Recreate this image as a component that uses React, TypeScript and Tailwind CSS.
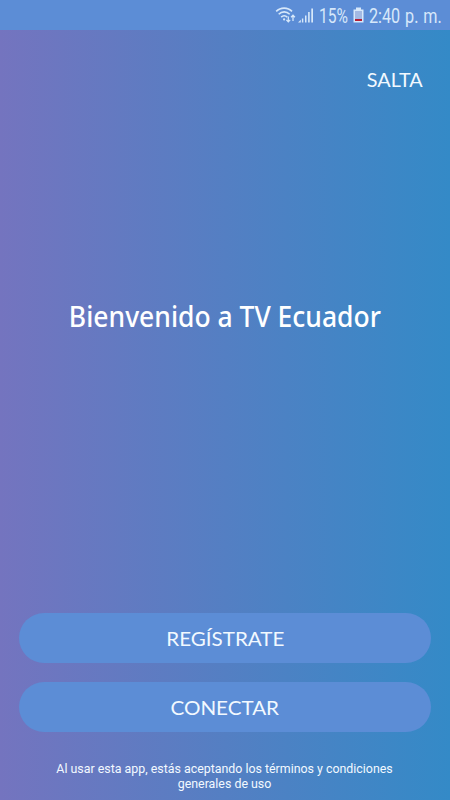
import React from 'react';

const WifiIcon: React.FC = () => (
  <svg className="h-[18px] w-[22px] shrink-0" viewBox="0 0 22 18" fill="none" stroke="currentColor" strokeWidth="1.6">
    <path d="M1.2 5.4C5.5 1 12.8 1 17 5.4" />
    <path d="M3.7 8.3C6.8 5.1 11.5 5.1 14.7 8.3" />
    <path d="M6.2 11.1c1.7-1.8 4.3-1.8 6 0" />
    <circle cx="9.1" cy="13.4" r="1.1" fill="currentColor" stroke="none" />
    <path d="M13.3 10.5v5.5M11.4 13.9l1.9 2 1.9-2M18 15V9.3M16.1 11.3l1.9-2 1.9 2" strokeWidth="1.3" />
  </svg>
);

const SignalIcon: React.FC = () => (
  <svg className="h-[18px] w-[16px] shrink-0" viewBox="0 0 16 18" fill="currentColor">
    <path d="M0 16.5h2.8v-2.8z" />
    <path d="M3.9 12.5h1.4v4H3.9zM7 9.5h1.5v7H7zM10.1 6h1.6v10.5h-1.6zM13.3 2.5H15v14h-1.7z" />
  </svg>
);

const BatteryIcon: React.FC = () => (
  <svg className="h-[16px] w-[11px] shrink-0" viewBox="0 0 11 16">
    <path d="M3 .5h5v2h2.5V15.5H.5V2.5H3z" fill="#d7e8fa" />
    <path d="M2 4h7v8H2z" fill="#a3b9e3" />
    <path d="M2 12h7v2H2z" fill="#b51f35" />
  </svg>
);

const StatusBar: React.FC = () => (
  <header className="flex h-[30px] items-center bg-[#5c8dd6] pl-[275px] font-['Roboto'] text-[19.5px] leading-[20px] text-[#d7e8fa]">
    <WifiIcon />
    <div className="ml-[1px] flex">
      <SignalIcon />
    </div>
    <div className="ml-[5px] w-[30px] whitespace-nowrap pt-[3px]">
      <span className="inline-block origin-left scale-x-[0.8]">15%</span>
    </div>
    <div className="ml-[4px] flex">
      <BatteryIcon />
    </div>
    <div className="ml-[5px] w-[74px] whitespace-nowrap pt-[3px]">
      <span className="inline-block origin-left scale-x-[0.83] [word-spacing:1px]">2:40 p. m.</span>
    </div>
  </header>
);

const PillButton: React.FC<{ label: string }> = ({ label }) => (
  <button className="flex h-[50px] w-full items-center justify-center rounded-full bg-[#5c8dd6] font-['Lato'] text-xl text-[#f2f9ff]">
    <span className="inline-block scale-x-[1.03]">{label}</span>
  </button>
);

export default function App() {
  return (
    <div className="flex h-[800px] w-[450px] flex-col overflow-hidden bg-linear-to-r/srgb from-[#7474bf] to-[#348ac7]">
      <StatusBar />
      <div className="flex justify-end pr-[27px] pt-[38px]">
        <button className="origin-right scale-x-[1.04] font-['Lato'] text-[19px] leading-6 text-[#f2f9ff]">SALTA</button>
      </div>
      <main className="flex justify-center pt-[204px]">
        <h1 className="origin-center scale-x-[0.913] whitespace-nowrap font-['Noto_Sans'] text-[29px] font-medium leading-10 text-white">
          Bienvenido a TV Ecuador
        </h1>
      </main>
      <footer className="mt-auto flex flex-col items-center">
        <div className="flex w-full flex-col gap-[19px] px-[19px]">
          <PillButton label="REGÍSTRATE" />
          <PillButton label="CONECTAR" />
        </div>
        <p className="scale-x-[0.953] pb-[9px] pt-[30px] text-center font-['Roboto'] text-[13px] leading-[14.5px] text-[#f2f9ff]">
          Al usar esta app, estás aceptando los términos y condiciones
          <br />
          generales de uso
        </p>
      </footer>
    </div>
  );
}
